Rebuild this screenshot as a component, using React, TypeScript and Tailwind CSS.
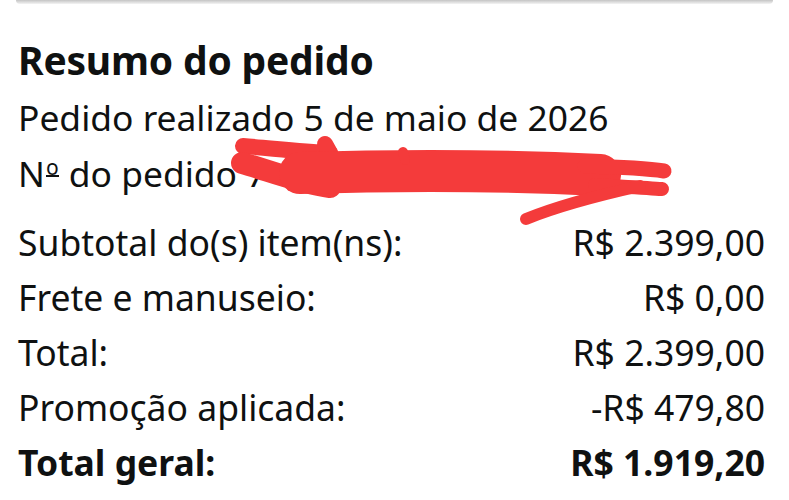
import React from "react";

const rows = [
  { label: "Subtotal do(s) item(ns):", value: "R$ 2.399,00" },
  { label: "Frete e manuseio:", value: "R$ 0,00" },
  { label: "Total:", value: "R$ 2.399,00" },
  { label: "Promoção aplicada:", value: "-R$ 479,80" },
];

export default function App() {
  return (
    <div
      className="relative w-[789px] h-[500px] overflow-hidden bg-white text-[#0f1111]"
      style={{ fontFamily: '"Noto Sans", "Open Sans", sans-serif' }}
    >
      <div className="mx-[16px] h-[4px] rounded-b-[6px] bg-gradient-to-b from-[#c4c4c4] to-[#f4f4f4]" />
      <div className="pl-[18px] pr-[24px] pt-[29px]">
        <h1 className="text-[39px] font-bold leading-[54px] tracking-[-0.2px]">Resumo do pedido</h1>
        <div className="text-[35.4px] leading-[56px] mt-[2px]">Pedido realizado 5 de maio de 2026</div>
        <div className="text-[35.4px] leading-[56px]">
          N
          <span className="inline-block text-[21px] leading-[16px] border-b-[2px] border-[#0f1111] align-[12px] mx-[1px]">
            o
          </span>{" "}
          do pedido 7
        </div>
        <div className="mt-[14px]">
          {rows.map((r) => (
            <div key={r.label} className="flex justify-between text-[35.5px] leading-[55px]">
              <span>{r.label}</span>
              <span>{r.value}</span>
            </div>
          ))}
          <div className="flex justify-between text-[35.5px] leading-[55px] font-bold">
            <span>Total geral:</span>
            <span>R$ 1.919,20</span>
          </div>
        </div>
      </div>
      <svg
        className="absolute left-0 top-0 pointer-events-none"
        width="789"
        height="500"
        viewBox="0 0 789 500"
      >
        <g stroke="#f43b3b" fill="#f43b3b" strokeLinecap="round" strokeLinejoin="round">
          <path d="M290 158 L 330 152 L 330 190 L 290 188 Z" strokeWidth="6" />
          <path d="M243 146 C 270 148, 300 152, 330 153" strokeWidth="16" fill="none" />
          <path d="M325 144 L 330 153" strokeWidth="16" fill="none" />
          <path d="M242 163 C 270 171, 300 183, 330 187" strokeWidth="22" fill="none" />
          <path d="M300 173 C 400 170, 500 170, 600 175" strokeWidth="42" fill="none" />
          <path d="M403 152 L 405 160" strokeWidth="10" fill="none" />
          <path d="M585 166 C 620 167, 645 168, 664 171" strokeWidth="15" fill="none" />
          <path d="M595 185 C 630 187, 650 188, 662 189" strokeWidth="14" fill="none" />
          <path d="M526 219 C 560 205, 600 195, 640 186" strokeWidth="12" fill="none" />
        </g>
      </svg>
    </div>
  );
}
